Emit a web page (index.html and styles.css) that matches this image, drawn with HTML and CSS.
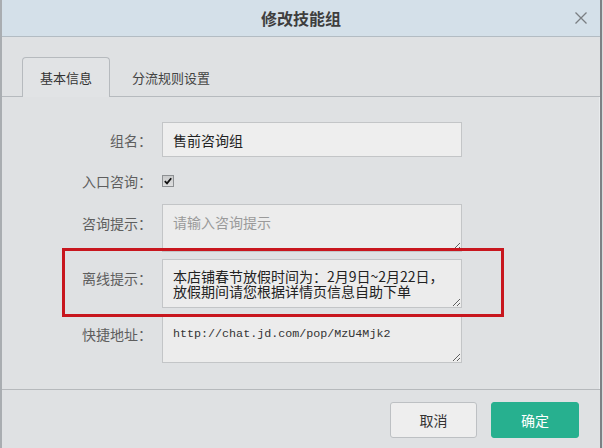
FILE: index.html
```html
<!DOCTYPE html>
<html lang="zh-CN">
<head>
<meta charset="utf-8">
<title>修改技能组</title>
<link rel="stylesheet" href="styles.css">
</head>
<body>
<div class="modal">
  <header class="modal-head">
    <h1 class="modal-title">修改技能组</h1>
    <button class="close" aria-label="关闭">
      <svg width="12" height="12" viewBox="0 0 12 12"><path d="M0.5 0.5 L11.5 11.5 M11.5 0.5 L0.5 11.5" stroke="#7a7e82" stroke-width="1.3" fill="none"/></svg>
    </button>
  </header>
  <div class="modal-body">
    <ul class="tabs">
      <li class="tab tab-active">基本信息</li>
      <li class="tab">分流规则设置</li>
    </ul>
    <div class="pane">
      <div class="form">
        <div class="row row-input">
          <label class="lbl">组名：</label>
          <input class="field" type="text" value="售前咨询组">
        </div>
        <div class="row row-check">
          <label class="lbl">入口咨询：</label>
          <span class="chk"><svg width="8" height="8" viewBox="0 0 8 8"><path d="M0.8 4.2 L3 6.4 L7.2 1.2" stroke="#111" stroke-width="1.8" fill="none"/></svg></span>
        </div>
        <div class="row row-area">
          <label class="lbl lbl-top">咨询提示：</label>
          <textarea class="area" placeholder="请输入咨询提示"></textarea>
        </div>
        <div class="row row-area">
          <label class="lbl lbl-top">离线提示：</label>
          <textarea class="area area-tall">本店铺春节放假时间为：2月9日~2月22日，放假期间请您根据详情页信息自助下单</textarea>
        </div>
        <div class="row row-area">
          <label class="lbl lbl-top">快捷地址：</label>
          <textarea class="area area-mono" readonly>http://chat.jd.com/pop/MzU4Mjk2</textarea>
        </div>
      </div>
    </div>
  </div>
  <footer class="modal-foot">
    <button class="btn btn-cancel">取消</button>
    <button class="btn btn-ok">确定</button>
  </footer>
  <div class="highlight"></div>
</div>
</body>
</html>
```
FILE: styles.css
```css
* { box-sizing: border-box; }
html, body { margin: 0; padding: 0; }
body {
  background: #d8dadc;
  font-family: "Noto Sans CJK SC", "Noto Sans", sans-serif;
  color: #333;
}
.modal {
  position: relative;
  width: 602px;
  height: 448px;
  background: #dfe1e3;
  border-left: 2px solid #a9adb1;
  border-right: 2px solid #7d8185;
  display: flex;
  flex-direction: column;
  overflow: hidden;
}
.modal-head {
  height: 37px;
  flex: none;
  background: #d4e0e9;
  border-bottom: 1px solid #b3bcc3;
  display: flex;
  align-items: center;
  justify-content: center;
  position: relative;
}
.modal-title {
  margin: 0;
  font-size: 16px;
  font-weight: 700;
  color: #3e3e3e;
  line-height: 20px;
}
.close {
  position: absolute;
  right: 12px;
  top: 11px;
  width: 14px;
  height: 14px;
  padding: 1px;
  border: 0;
  background: none;
  display: flex;
}
.modal-body {
  flex: 1;
  display: flex;
  flex-direction: column;
}
.tabs {
  list-style: none;
  margin: 0;
  padding: 20px 0 0 20px;
  display: flex;
  border-bottom: 1px solid #b6babe;
  height: 60px;
}
.tab {
  height: 39px;
  padding: 0 17px;
  font-size: 13px;
  line-height: 39px;
  color: #444;
  margin-right: 4px;
  border: 1px solid transparent;
  border-bottom: 0;
}
.tab-active {
  height: 40px;
  background: #e1e3e5;
  border-color: #b6babe;
  border-radius: 4px 4px 0 0;
  color: #333;
}
.pane {
  flex: 1;
  border-right: 1px solid #eaecee;
  padding-top: 25px;
}
.form {
  display: flex;
  flex-direction: column;
  gap: 7px;
}
.row {
  display: flex;
  align-items: center;
  gap: 10px;
}
.row-check {
  height: 24px;
  margin: 5px 0 4px;
}
.row-area { align-items: flex-start; }
.lbl {
  width: 150px;
  flex: none;
  text-align: right;
  font-size: 14px;
  line-height: 20px;
  color: #5e5e5e;
}
.lbl-top { padding-top: 9px; }
.field {
  width: 300px;
  height: 35px;
  border: 1px solid #c3c5c7;
  background: #eeeeee;
  padding: 0 10px;
  font-family: "Noto Sans CJK SC", sans-serif;
  font-size: 14px;
  color: #222;
  outline: none;
}
.chk {
  width: 12px;
  height: 12px;
  border: 1px solid #8d9093;
  background: linear-gradient(#c9cacb, #dedfe0);
  display: flex;
  align-items: center;
  justify-content: center;
}
.area {
  width: 300px;
  height: 48px;
  border: 1px solid #c3c5c7;
  background: #ececec;
  padding: 10px 10px 0;
  font-family: "Noto Sans CJK SC", sans-serif;
  font-size: 14px;
  line-height: 15px;
  color: #222;
  outline: none;
  resize: both;
  overflow: hidden;
}
.area::placeholder { color: #9a9a9a; }
.area-tall { height: 49px; padding-top: 9px; }
.area-mono {
  font-family: "Liberation Mono", monospace;
  font-size: 11.7px;
  color: #333;
  padding-top: 11px;
}
.modal-foot {
  height: 59px;
  flex: none;
  border-top: 1px solid #b6b9bc;
  display: flex;
  justify-content: flex-end;
  align-items: flex-start;
  gap: 14px;
  padding: 12px 21px 0 0;
}
.btn {
  height: 36px;
  font-family: "Noto Sans CJK SC", sans-serif;
  font-size: 14px;
  border-radius: 3px;
  padding: 0;
}
.btn-cancel {
  width: 87px;
  background: #eeeeee;
  border: 1px solid #bdc0c3;
  color: #333;
}
.btn-ok {
  width: 88px;
  background: #27b08f;
  border: 1px solid #27b08f;
  color: #ffffff;
}
.highlight {
  position: absolute;
  left: 60px;
  top: 248px;
  width: 442px;
  height: 69px;
  border: 3px solid #c8161e;
  pointer-events: none;
}
```
